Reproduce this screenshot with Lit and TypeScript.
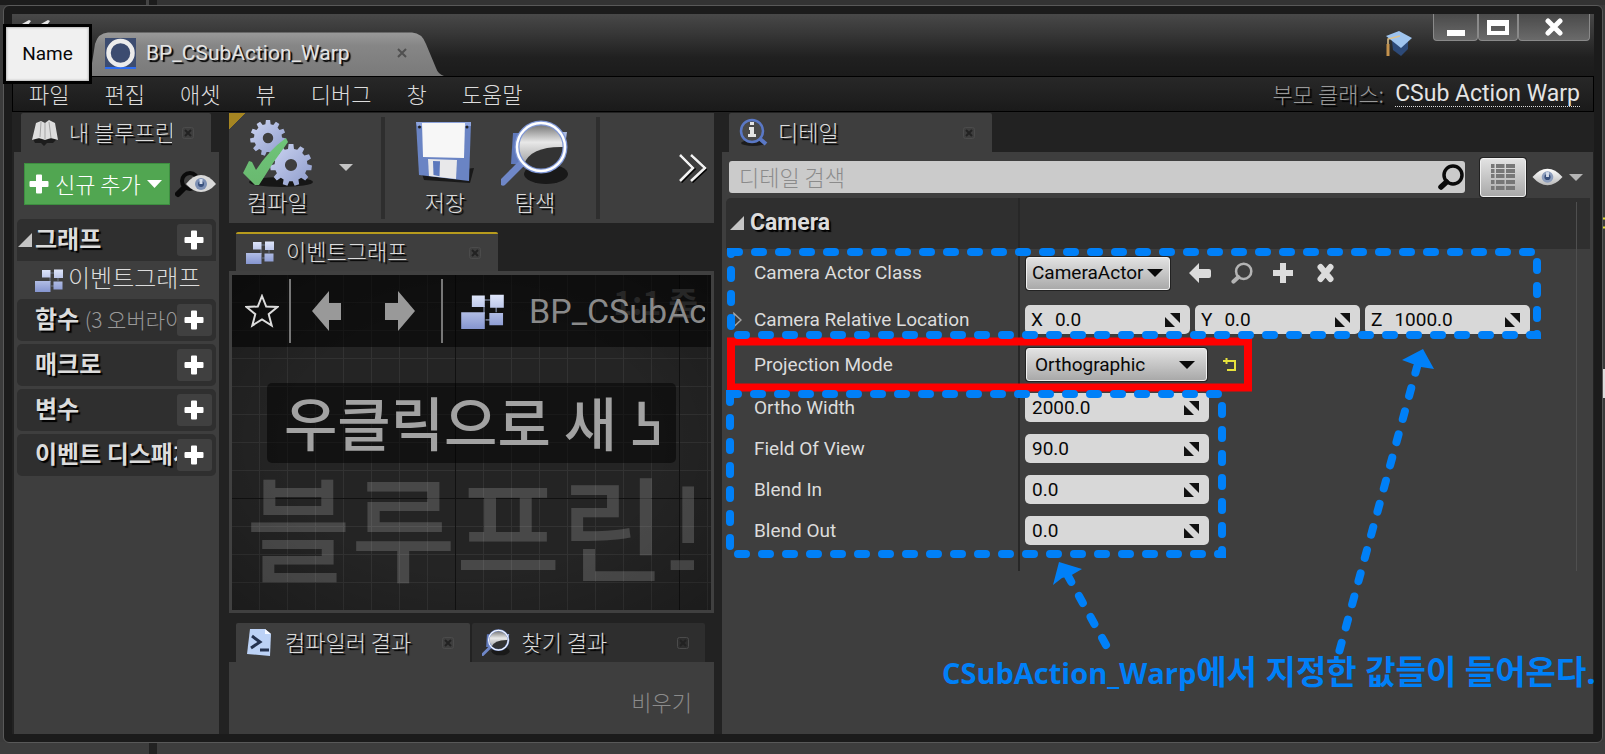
import { LitElement, html, css, svg } from "lit";
import { customElement } from "lit/decorators.js";

const plusIcon = html`<svg class="ico" width="20" height="20" viewBox="0 0 20 20" aria-hidden="true"><path d="M7 1.500Q7 .5 8 .5h4q1 0 1 1V7h5.500q1 0 1 1v4q0 1-1 1H13v5.500q0 1-1 1H8q-1 0-1-1V13H1.500q-1 0-1-1V8q0-1 1-1H7z" fill="#fff"/></svg>`;

const nodesIcon = (w: number) => html`<svg class="ico" width=${w} height=${Math.round(w * 0.82)} viewBox="0 0 28 23" aria-hidden="true">
  <defs><linearGradient id="nd" x1="0" y1="0" x2="0" y2="1"><stop offset="0" stop-color="#dfe6fa"/><stop offset="1" stop-color="#8595cf"/></linearGradient></defs>
  <path d="M15 4h4M23 8v4M15 8v5M16 17h3" stroke="#6b7488" stroke-width="1"/>
  <path d="M7 1h8.500v7.500H7z M19 .5h9V9h-9z M0 12h15.500v11H0z M18.500 12.500h9v8h-9z" fill="url(#nd)"/></svg>`;

const closeIcon = html`<svg class="ico" width="12" height="12" viewBox="0 0 12 12" aria-hidden="true"><rect x=".5" y=".5" width="11" height="11" rx="2" fill="none" stroke="#4b4b4b"/><path d="M3 3l6 6M9 3l-6 6" stroke="#222" stroke-width="2"/></svg>`;

const eyeIcon = html`<svg class="ico" width="31" height="18" viewBox="0 0 32 18" aria-hidden="true">
  <defs><linearGradient id="ey" x1="0" y1="0" x2="0" y2="1"><stop offset="0" stop-color="#fff"/><stop offset="1" stop-color="#b9b9b9"/></linearGradient></defs>
  <path d="M.5 9Q8 .5 16 .5T31.500 9Q24 17.500 16 17.500T.5 9z" fill="url(#ey)"/>
  <circle cx="16" cy="9" r="6" fill="#8d9ebd"/><circle cx="16" cy="9" r="3.200" fill="#39507c"/><path d="M14.500 4h3v5h-3z" fill="#d4dcea"/></svg>`;

const caret = (w: number, color: string) => html`<svg class="ico" width=${w} height=${Math.round(w / 2)} viewBox="0 0 14 7" preserveAspectRatio="none" aria-hidden="true"><path d="M0 0h14L7 7z" fill=${color}/></svg>`;

const spinIcon = html`<svg class="ico" width="15" height="14" viewBox="0 0 15 14" aria-hidden="true"><path d="M5 0h10v10z" fill="#111"/><path d="M0 4v10h10z" fill="#111"/></svg>`;

const gear = (cx: number, cy: number, r: number, n: number) => {
  const pts: string[] = [];
  for (let i = 0; i < n; i++) {
    const a = (i / n) * Math.PI * 2 - Math.PI / 2;
    const s = (Math.PI * 2) / n;
    for (const [f, k] of [[-0.32, 0.78], [-0.2, 1], [0.2, 1], [0.32, 0.78]]) {
      pts.push(`${(cx + Math.cos(a + f * s) * r * k).toFixed(1)} ${(cy + Math.sin(a + f * s) * r * k).toFixed(1)}`);
    }
  }
  const h = r * 0.29;
  return svg`<path fill-rule="evenodd" fill="url(#gr)" d="M${pts.join("L")}z M${cx - h} ${cy}a${h} ${h} 0 1 0 ${2 * h} 0a${h} ${h} 0 1 0 ${-2 * h} 0z"/>`;
};

const compileIcon = html`<svg class="ico" width="70" height="68" viewBox="0 0 70 68" aria-hidden="true">
  <defs><linearGradient id="gr" x1="0" y1="0" x2="1" y2="1"><stop offset="0" stop-color="#cdd5f2"/><stop offset="1" stop-color="#8d9bcb"/></linearGradient>
  <linearGradient id="ck" x1="0" y1="0" x2="0" y2="1"><stop offset="0" stop-color="#6fc47a"/><stop offset="1" stop-color="#69b96f"/></linearGradient></defs>
  <ellipse cx="38" cy="62" rx="32" ry="5" fill="#161616"/>
  ${gear(25, 18, 18, 11)}${gear(48, 45, 21, 11)}
  <path d="M0 53l6-12 3 1 4 8Q26 30 43 18l2 4Q30 42 16 65h-4z" fill="url(#ck)"/></svg>`;

const saveIcon = html`<svg class="ico" width="58" height="64" viewBox="0 0 58 64" aria-hidden="true">
  <path d="M6 54L58 48 54 63 8 60z" fill="#191919"/>
  <path d="M0 2l55 0-2 59-50-6z" fill="#6a84c4"/><path d="M0 2h55v4H1z" fill="#8ea4dc"/>
  <path d="M6 3h43l-1 35-41-1z" fill="#f7f7f7"/><circle cx="3.500" cy="7" r="1.500" fill="#222"/><circle cx="51" cy="7" r="1.500" fill="#222"/>
  <path d="M12 39l29 1-1 19-27-3z" fill="#e8e8ea"/><path d="M17 41l7 .3-.5 15L17.500 55z" fill="#5c78bd"/></svg>`;

const lensIcon = (w: number) => html`<svg class="ico" width=${w} height=${w} viewBox="0 0 68 68" aria-hidden="true">
  <defs><linearGradient id="ln" x1="0" y1="0" x2="0" y2="1"><stop offset="0" stop-color="#6a6a6a"/><stop offset=".4" stop-color="#e8e8e8"/><stop offset="1" stop-color="#8c8c8c"/></linearGradient></defs>
  <ellipse cx="45" cy="54" rx="22" ry="10" fill="#191919"/>
  <path d="M12 13h20v32l-22-1z" fill="#6079bb"/><path d="M60 12l6 0-2 14z" fill="#a9b8de"/>
  <path d="M21 43L2 62" stroke="#6f87c8" stroke-width="7" stroke-linecap="round"/>
  <circle cx="40" cy="27" r="24" fill="url(#ln)"/>
  <path d="M23 44Q30 26 63 27Q62 48 41 51 29 51 23 44z" fill="#333"/>
  <circle cx="40" cy="27" r="24" fill="none" stroke="#7f97d6" stroke-width="5"/>
  <circle cx="40" cy="27" r="24" fill="none" stroke="#fff" stroke-width="2.500"/></svg>`;

const searchIcon = (w: number, c: string, t: number) => html`<svg class="ico" width=${w} height=${w} viewBox="0 0 26 26" aria-hidden="true"><circle cx="15" cy="11" r="9" fill="none" stroke=${c} stroke-width=${t}/><path d="M8.500 18L3 23" stroke=${c} stroke-width=${t + 2} stroke-linecap="round"/></svg>`;

@customElement("app-root")
export class AppRoot extends LitElement {
  static styles = css`
    :host { display: block; font-family: Roboto, "Noto Sans CJK KR", sans-serif; color: #dcdcdc; }
    * { box-sizing: border-box; }
    button, input, select { font: inherit; color: inherit; border: 0; margin: 0; padding: 0; background: none; border-radius: 0; }
    svg { display: block; }
    .ico { flex: none; }
    .kr { font-family: "Noto Sans CJK KR", sans-serif; font-weight: 300; font-size: 22px; line-height: 26px; }
    .sh { text-shadow: 2px 2px 1px #000; }
    .clip { overflow: hidden; white-space: nowrap; }

    .desk { position: relative; min-height: 100vh; overflow: hidden; display: flex; padding: 5px 2px 11px 3px; background: linear-gradient(90deg, #1c1c1c 146px, #444 146px, #444 149px, #1c1c1c 149px, #1c1c1c 157px, #333 157px) top / 100% 5px no-repeat, linear-gradient(90deg, #3d3d3d 149px, #222 149px, #222 157px, #3d3d3d 157px) bottom / 100% 12px no-repeat, #3b3b3b; }
    .window { flex: 1; min-width: 0; display: flex; flex-direction: column; border: 1px solid #595959; border-radius: 6px; background: #1b1b1b; padding: 8px; }
    .title { height: 62px; display: flex; align-items: flex-end; justify-content: space-between; background: linear-gradient(#484848, #383838 30%, #202020 70%, #1b1b1b); padding-left: 78px; }
    .tab-main { position: relative; width: 354px; height: 44px; display: flex; align-items: center; gap: 10px; padding: 0 37px 2px 15px; }
    .tab-bg { position: absolute; inset: 0; width: 100%; height: 100%; }
    .tab-main > *:not(.tab-bg) { position: relative; }
    .tab-text { flex: 1; font-size: 21px; line-height: 24px; color: #e4e4e4; }
    .tools { align-self: stretch; display: flex; gap: 20px; }
    .cap { margin-top: 17px; }
    .wbtns { display: flex; height: 27px; padding-right: 4px; }
    .wbtn { display: grid; place-items: center; width: 45px; border: 1px solid #8a8a8a; border-top: 0; background: linear-gradient(#4a4a4a, #6a6a6a); border-radius: 0 0 4px 4px; }
    .wbtn:nth-child(2) { width: 40px; }
    .wbtn:nth-child(3) { width: 72px; }

    .menu { height: 36px; border: 1px solid #000; background: linear-gradient(#282828, #1a1a1a); display: flex; align-items: center; gap: 35px; padding: 0 13px 3px 16px; }
    .parent { margin-left: auto; display: flex; align-items: center; gap: 11px; color: #999; }
    .parent a { color: #e4e4e4; font: 400 23px/24px Roboto, sans-serif; text-decoration: none; border-bottom: 1px dotted #ddd; padding-top: 3px; }

    .body { flex: 1; background: #222; display: grid; grid-template-columns: 205px 485px minmax(0, 1fr); column-gap: 10px; padding: 1px 1px 0 2px; }
    .left, .mid, .right { display: flex; flex-direction: column; min-width: 0; }
    .right { margin-left: -2px; }
    .tab { height: 39px; background: #3e3e3e; display: flex; align-items: center; padding: 0 17px 0 10px; gap: 12px; border-radius: 2px 2px 0 0; }
    .tab .clip { flex: 1; padding-bottom: 3px; }
    .tab.active { border-top: 2px solid #b79b1d; }
    .tab.active .clip { padding-bottom: 5px; }
    .tab.idle { background: #2e2e2e; }
    .panel { flex: 1; background: #3e3e3e; }

    .left .tab { margin: 0 8px 0 7px; width: 190px; gap: 10px; }
    .left .panel { width: 205px; padding: 11px 3px; }
    .addrow { display: flex; align-items: center; gap: 5px; padding: 0 0 0 7px; margin-bottom: 14px; }
    .add { width: 146px; height: 42px; display: flex; align-items: center; gap: 6px; padding: 0 8px 0 4px; background: #51a651; color: #fff; border: 1px solid #3d8f40; white-space: nowrap; }
    .add span { flex: 1; text-align: left; padding-bottom: 2px; }
    .sec { height: 42px; background: #2f2f2f; border-radius: 5px; display: flex; align-items: center; padding: 0 4px 0 1px; margin-bottom: 3px; }
    .sec.tight { margin-bottom: 0; border-radius: 5px 5px 0 0; }
    .sec h3 { flex: 1; margin: 0 0 0 3px; padding-bottom: 4px; font-size: 24px; line-height: 32px; font-weight: 700; }
    .sec small { font-size: 21px; font-weight: 300; color: #999; text-shadow: none; }
    .tri { flex: none; width: 14px; height: 14px; }
    .sq { flex: none; width: 35px; height: 32px; background: #404040; border-radius: 3px; display: flex; align-items: center; padding-left: 7px; }
    .item { height: 38px; display: flex; align-items: center; gap: 5px; padding-left: 18px; white-space: nowrap; }
    .item.kr { font-size: 24px; }
    .item span { padding-bottom: 6px; }

    .bar { height: 110px; background: linear-gradient(135deg, #a58522 12px, #3e3e3e 12px); display: flex; align-items: stretch; padding: 4px 7px 4px 14px; }
    .tool { display: flex; flex-direction: column; align-items: center; justify-content: space-between; padding: 3px 0 0; height: 97px; }
    .tool.compile { align-items: flex-start; }
    .tool.compile span { padding-left: 4px; }
    .sep { width: 4px; background: #2e2e2e; }
    .drop { width: 68px; display: grid; place-items: center; padding: 0 2px 2px 0; }
    .pair { flex: none; display: flex; gap: 27px; padding: 0 27px 0 31px; }
    .more { margin-left: auto; display: grid; place-items: center; }
    .mid .doc { margin: 9px 0 0 7px; width: 262px; }
    .graph { position: relative; flex: 1; overflow: hidden; border: 3px solid #404040; border-top-width: 4px; background: #242424; display: flex; flex-direction: column; }
    .grid { position: absolute; inset: 0; background:
      radial-gradient(ellipse at center, transparent 55%, rgba(0,0,0,.3) 110%),
      linear-gradient(90deg, transparent 223px, #111 223px) 0 0 / 224px 100%,
      linear-gradient(transparent 223px, #111 223px) 0 0 / 100% 224px,
      linear-gradient(90deg, transparent 27px, #323232 27px) 0 0 / 28px 100%,
      linear-gradient(transparent 27px, #323232 27px) 0 0 / 100% 28px; }
    .crumbs { position: relative; height: 72px; background: rgba(0,0,0,.55); display: flex; align-items: center; padding: 0 6px 0 13px; }
    .crumbs i { width: 2px; height: 64px; background: #777; flex: none; }
    .crumbs .star { margin-right: 10px; }
    .crumbs .back { margin: 0 44px 0 21px; }
    .crumbs .fwd { margin-right: 26px; }
    .crumbs .nodes { margin: 0 25px 0 18px; }
    .crumbs .name { flex: 1; font-size: 34px; line-height: 40px; color: #8a8a8a; position: relative; }
    .zoom { position: absolute; right: 13px; top: 4px; font: 700 32px/44px "Noto Sans CJK KR", sans-serif; color: #272727; }
    .hint { position: relative; margin: 36px 35px 0; height: 80px; padding: 0 17px; border-radius: 5px; background: rgba(0,0,0,.5); font: 500 58px/76px "Noto Sans CJK KR", sans-serif; color: #a2a2a2; }
    .mark { position: relative; margin: 0 17px 0 14px; font: 500 114px/122px "Noto Sans CJK KR", sans-serif; color: rgba(255,255,255,.17); }
    .results { display: flex; gap: 2px; margin: 10px 9px 0 7px; }
    .results .tab { flex: 1; padding-right: 16px; }
    .log { height: 72px; background: #3e3e3e; display: flex; justify-content: flex-end; align-items: center; padding: 6px 22px 0; color: #8b8b8b; }

    .right .tab { width: 263px; margin-left: 7px; gap: 10px; }
    .right .panel { padding: 5px 3px 0 4px; }
    .search { display: flex; align-items: center; padding: 0 7px 0 3px; height: 40px; }
    .search .box { flex: 1; height: 32px; display: flex; align-items: center; background: #cbcbcb; border-radius: 3px; padding: 0 1px 0 10px; }
    .box input { flex: 1; min-width: 0; height: 32px; padding-bottom: 3px; color: #222; outline: 0; }
    .box input::placeholder { color: #8b8b8b; opacity: 1; }
    .raised { border: 1px solid #f0f0f0; box-shadow: 0 0 0 1px #222; background: linear-gradient(#e2e2e2, #a9a9a9); border-radius: 3px; }
    .matrix { width: 46px; height: 39px; display: grid; place-items: center; margin: 0 6px 0 15px; }
    .opts { display: flex; align-items: center; gap: 6px; }
    .table { display: grid; grid-template-columns: 292px 2px minmax(0, 1fr); margin-top: 1px; }
    .cells { display: contents; }
    .head { height: 51px; background: #2f2f2f; }
    .head.name { display: flex; align-items: center; gap: 6px; padding: 0 0 2px 4px; border-radius: 5px 0 0 0; }
    .head.name h2 { margin: 0; font-size: 23px; line-height: 28px; }
    .line { background: #272727; }
    .cell { display: flex; align-items: center; font-size: 19px; line-height: 24px; }
    .cell.lbl { padding-left: 28px; }
    .cell.lbl.exp { padding-left: 7px; gap: 12px; }
    .cell.val { padding-left: 5px; gap: 5px; color: #080808; }
    .h48 { height: 48px; } .h45 { height: 45px; } .h41 { height: 41px; } .h20 { height: 20px; }
    .sel { display: grid; height: 33px; align-items: center; margin-left: 1px; }
    .sel > * { grid-area: 1 / 1; }
    .sel select { appearance: none; height: 31px; padding: 0 8px; outline: 0; }
    .sel.short { width: 144px; } .sel.short select { padding: 0 5px; }
    .sel.long { width: 181px; margin-right: 11px; }
    .sel svg { justify-self: end; margin-right: 11px; pointer-events: none; }
    .sel.short svg { margin-right: 6px; }
    .num { display: flex; align-items: center; height: 29px; width: 184px; background: #d8d8d8; border-radius: 5px; padding: 0 10px 0 7px; gap: 12px; }
    .num.axis { width: 165px; padding: 0 10px 0 6px; }
    .num input { flex: 1; min-width: 0; width: 20px; outline: 0; }
    .acts { display: flex; align-items: center; gap: 20px; padding-left: 14px; }
    .notes { position: absolute; left: 0; top: 0; width: 100%; height: 100%; overflow: visible; pointer-events: none; }
    .note { position: absolute; left: 942px; top: 651px; white-space: nowrap; font: 700 29px/42px "Open Sans", "Noto Sans CJK KR", sans-serif; color: #0080f8; }
    .note b { font-size: 33px; font-weight: 700; }
    .tip { position: absolute; left: 3px; top: 24px; width: 89px; height: 60px; border: 3px solid #000; background: #f0f0f0; box-shadow: inset 0 0 2px 1px #bbb; color: #080808; font-size: 19px; line-height: 54px; text-align: center; }
  `;

  private tri() {
    return html`<svg class="tri" viewBox="0 0 14 14" aria-hidden="true"><path d="M14 0v14H0z" fill="#c4c4c4"/></svg>`;
  }

  private section(title: string, open = false, extra = "") {
    return html`<div class="sec ${open ? "tight" : ""}">
      ${open ? this.tri() : html`<span class="tri"></span>`}
      <h3 class="kr sh clip">${title} ${extra ? html`<small>${extra}</small>` : ""}</h3>
      <button class="sq" aria-label="${title} +">${plusIcon}</button>
    </div>`;
  }

  private num(id: string, value: string, axis = "") {
    return html`<div class="num ${axis ? "axis" : ""}">
      ${axis ? html`<label for=${id}>${axis}</label>` : ""}
      <input id=${id} .value=${value} />${spinIcon}
    </div>`;
  }

  private row(label: string, id: string, value: string) {
    return html`<div class="cells">
      <label class="cell lbl h41" for=${id}>${label}</label><div class="line"></div>
      <div class="cell val">${this.num(id, value)}</div>
    </div>`;
  }

  render() {
    return html`<div class="desk">
      <div class="window">
        <header class="title">
          <div class="tab-main">
            <svg class="tab-bg" viewBox="0 0 354 44" preserveAspectRatio="none" aria-hidden="true">
              <defs><linearGradient id="tb" x1="0" y1="0" x2="0" y2="1"><stop offset="0" stop-color="#9a9a9a"/><stop offset=".3" stop-color="#868686"/><stop offset="1" stop-color="#7a7a7a"/></linearGradient></defs>
              <path d="M0 44L5 12Q8 1 18 .5H322Q332 1 336 12L346 36Q348 42 354 44z" fill="url(#tb)"/></svg>
            <svg class="ico" width="31" height="31" viewBox="0 0 31 31" aria-hidden="true"><path d="M0 0h31v31H0z" fill="#3c4c70"/><path d="M0 29h31v2H0z" fill="#2f6df0"/><circle cx="15.500" cy="15" r="12" fill="none" stroke="#ececec" stroke-width="4.500"/></svg>
            <span class="tab-text sh">BP_CSubAction_Warp</span>
            <svg class="ico" width="10" height="10" viewBox="0 0 10 10" aria-hidden="true"><path d="M1 1l8 8M9 1L1 9" stroke="#505050" stroke-width="2"/></svg>
          </div>
          <div class="tools">
            <svg class="cap" width="28" height="26" viewBox="0 0 28 26" aria-hidden="true"><path d="M7 10l1 9 8 6 7-7V10z" fill="#2d4a78"/><path d="M1 5l13-5 13 7-11 10z" fill="#9fc4ee"/><path d="M15 5L3 8v6" fill="none" stroke="#e0c38c" stroke-width="1.500"/><path d="M1.500 13h3v12h-3z" fill="#c4924d"/></svg>
            <div class="wbtns">
              <button class="wbtn" aria-label="Minimize"><svg width="20" height="20" viewBox="0 0 20 20"><path d="M1 13h18v6H1z" fill="#fff"/></svg></button>
              <button class="wbtn" aria-label="Maximize"><svg width="22" height="16" viewBox="0 0 22 16"><path fill-rule="evenodd" d="M0 1h22v15H0z M4 7v5h14V7z" fill="#fff"/></svg></button>
              <button class="wbtn" aria-label="Close"><svg width="18" height="18" viewBox="0 0 18 18"><path d="M3 3l12 12M15 3L3 15" stroke="#fff" stroke-width="5" stroke-linecap="round"/></svg></button>
            </div>
          </div>
        </header>
        <nav class="menu kr">
          ${["파일", "편집", "애셋", "뷰", "디버그", "창", "도움말"].map((t) => html`<button>${t}</button>`)}
          <div class="parent"><span class="sh">부모 클래스:</span><a href="#">CSub Action Warp</a></div>
        </nav>
        <main class="body">
          <section class="left">
            <div class="tab kr">
              <svg class="ico" width="28" height="28" viewBox="0 0 28 28" aria-hidden="true"><path d="M2 20h24l-4 4H16l-3 3-3-3H4z" fill="#1c1c1c"/><path d="M5 4l5-2 4 2 4-3 6 3 3 17-7-2-6 2-6-2-7 2z" fill="#dedede"/><path d="M10 3L9 18M14 4v16M18 3l2 16" stroke="#a5a5a5"/></svg>
              <span class="clip sh">내 블루프린</span>${closeIcon}
            </div>
            <div class="panel">
              <div class="addrow">
                <button class="add kr">${plusIcon}<span>신규 추가</span>${caret(15, "#fff")}</button>
                <svg class="ico" width="42" height="28" viewBox="0 0 42 28" aria-hidden="true"><circle cx="15" cy="11" r="8" fill="none" stroke="#0a0a0a" stroke-width="4"/><path d="M9 18L3 24" stroke="#0a0a0a" stroke-width="6" stroke-linecap="round"/><path d="M11 14Q18 5 26 5t15 9q-7 8-15 8T11 14z" fill="#d9d9d9"/><circle cx="26" cy="14" r="6" fill="#7d90b4"/><circle cx="26" cy="14" r="3" fill="#39507c"/><path d="M24.500 9h3v5h-3z" fill="#d4dcea"/></svg>
              </div>
              ${this.section("그래프", true)}
              <div class="item kr">${nodesIcon(28)}<span>이벤트그래프</span></div>
              ${this.section("함수", false, "(3 오버라이드 가능)")}
              ${this.section("매크로")}
              ${this.section("변수")}
              ${this.section("이벤트 디스패처")}
            </div>
          </section>

          <section class="mid">
            <div class="bar kr">
              <button class="tool compile sh">${compileIcon}<span>컴파일</span></button>
              <button class="drop" aria-label="컴파일 옵션">${caret(14, "#c4c4c4")}</button>
              <div class="sep"></div>
              <div class="pair">
                <button class="tool sh">${saveIcon}<span>저장</span></button>
                <button class="tool sh">${lensIcon(68)}<span>탐색</span></button>
              </div>
              <div class="sep"></div>
              <button class="more" aria-label="더 보기"><svg width="28" height="30" viewBox="0 0 28 30"><path d="M1 2l13 13L1 28M12 2l14 13-14 13" fill="none" stroke="#000" stroke-width="3" transform="translate(1 1)"/><path d="M1 2l13 13L1 28M12 2l14 13-14 13" fill="none" stroke="#f2f2f2" stroke-width="2.500"/></svg></button>
            </div>
            <div class="tab doc active kr">${nodesIcon(28)}<span class="clip sh">이벤트그래프</span>${closeIcon}</div>
            <div class="graph">
              <div class="grid"></div>
              <div class="crumbs">
                <span class="zoom">1:1 줌</span>
                <svg class="ico star" width="34" height="34" viewBox="0 0 34 34" aria-hidden="true"><path d="M17 2l4.200 10.500L32.500 13l-8.800 7.200 3 11.300L17 25.500 7.300 31.500l3-11.300L1.500 13l11.300-.5z" fill="none" stroke="#ddd" stroke-width="2"/></svg>
                <i></i>
                <svg class="ico back" width="29" height="40" viewBox="0 0 29 40" aria-hidden="true"><path d="M0 20L17 0v12h12v17H17v11z" fill="#999"/></svg>
                <svg class="ico fwd" width="30" height="40" viewBox="0 0 30 40" aria-hidden="true"><path d="M30 20L13 0v12H0v17h13v11z" fill="#999"/></svg>
                <i></i>
                <span class="nodes">${nodesIcon(43)}</span>
                <span class="name clip">BP_CSubAction_Warp</span>
              </div>
              <div class="hint"><div class="clip">우클릭으로 새 노드</div></div>
              <div class="mark clip">블루프린트</div>
            </div>
            <div class="results kr">
              <div class="tab"><svg class="ico" width="27" height="27" viewBox="0 0 27 27" aria-hidden="true"><path d="M4 0h15l6 5-1 22L1 25z" fill="#bcd2f6"/><path d="M19 0v5h6z" fill="#f4f8ff"/><path d="M6 7l8 6-9 6M14 21h9" fill="none" stroke="#24324f" stroke-width="3"/></svg><span class="clip sh">컴파일러 결과</span>${closeIcon}</div>
              <div class="tab idle">${lensIcon(28)}<span class="clip sh">찾기 결과</span>${closeIcon}</div>
            </div>
            <div class="log kr"><button>비우기</button></div>
          </section>

          <section class="right">
            <div class="tab kr">
              <svg class="ico" width="29" height="29" viewBox="0 0 29 29" aria-hidden="true"><ellipse cx="14" cy="25" rx="12" ry="3" fill="#1c1c1c"/><path d="M20 20l7 6" stroke="#5a78c6" stroke-width="4"/><circle cx="13" cy="13" r="11" fill="#4a4a4a" stroke="#5a78c6" stroke-width="2.500"/><path d="M11 4h4v3h-4zM10 9h5v7h2v3H9v-3h2v-4h-1z" fill="#e4e4e4"/></svg>
              <span class="clip sh">디테일</span>${closeIcon}
            </div>
            <div class="panel">
              <div class="search">
                <div class="box"><input class="kr" type="search" aria-label="디테일 검색" placeholder="디테일 검색" />${searchIcon(26, "#0a0a0a", 3.5)}</div>
                <button class="matrix raised" aria-label="매트릭스"><svg width="24" height="26" viewBox="0 0 24 26">${[0, 5, 10, 16, 22].map((y) => svg`<path d="M0 ${y}h3.500v4H0zM5 ${y}h8.500v4H5zM15 ${y}h9v4h-9z" fill="#777"/>`)}</svg></button>
                <button class="opts" aria-label="보기 옵션">${eyeIcon}${caret(14, "#b4b4b4")}</button>
              </div>
              <div class="table">
                <div class="head name">${this.tri()}<h2 class="sh">Camera</h2></div><div class="line"></div><div class="head"></div>
                <label class="cell lbl h48" for="cls">Camera Actor Class</label><div class="line"></div>
                <div class="cell val">
                  <div class="sel short raised"><select id="cls"><option>CameraActor</option></select>${caret(16, "#080808")}</div>
                  <div class="acts">
                    <svg width="22" height="20" viewBox="0 0 22 20"><path d="M0 10L10 0v6h10q2 0 2 2v5q0 2-2 2H10v5z" fill="#dcdcdc"/></svg>
                    ${searchIcon(22, "#b4b4b4", 3)}
                    <svg width="20" height="20" viewBox="0 0 20 20"><path d="M7 0h6v7h7v6h-7v7H7v-7H0V7h7z" fill="#dcdcdc"/></svg>
                    <svg width="24" height="20" viewBox="0 0 24 20"><path d="M7.500 4l10 12M17.500 4l-10 12" stroke="#dcdcdc" stroke-width="6" stroke-linecap="round"/></svg>
                  </div>
                </div>
                <div class="cell lbl exp h45"><svg width="9" height="16" viewBox="0 0 9 16"><path d="M1 1.500v13L8 8z" fill="none" stroke="#a5a5a5" stroke-width="1.500"/></svg>Camera Relative Location</div><div class="line"></div>
                <div class="cell val">${this.num("x", "0.0", "X")}${this.num("y", "0.0", "Y")}${this.num("z", "1000.0", "Z")}</div>
                <label class="cell lbl h45" for="proj">Projection Mode</label><div class="line"></div>
                <div class="cell val">
                  <div class="sel long raised"><select id="proj"><option>Orthographic</option></select>${caret(16, "#080808")}</div>
                  <svg width="14" height="14" viewBox="0 0 14 14"><path d="M0 3h12v9H4M3.500 0v6" fill="none" stroke="#e6e23c" stroke-width="2"/></svg>
                </div>
                ${this.row("Ortho Width", "ow", "2000.0")}
                ${this.row("Field Of View", "fov", "90.0")}
                ${this.row("Blend In", "bi", "0.0")}
                ${this.row("Blend Out", "bo", "0.0")}
                <div class="h20"></div><div class="line"></div><div></div>
              </div>
            </div>
          </section>
        </main>
      </div>

      <svg class="notes" aria-hidden="true">
        <path d="M1576.500 202V571" stroke="#4f4f4f"/>
        <path d="M1603 218.500h2M1603 227.500h2" stroke="#e6e23c" stroke-width="2"/>
        <path d="M1603 369h2v29h-2z" fill="#ddd"/>
        <path d="M22 24l7-4 2 1-3 4zM41 24l7-4 2 1-3 4z" fill="#e8e8e8"/>
        <rect x="731" y="341.500" width="517" height="46" fill="none" stroke="#f00" stroke-width="8"/>
        <g fill="none" stroke="#0080f8" stroke-width="8" stroke-linecap="round" stroke-dasharray="8 16">
          <path d="M731 252H1537V335H731z"/>
          <path d="M730 394H1222V554H730z"/>
          <path d="M1339.500 650.500L1417 367"/>
          <path d="M1106 645L1068 576"/>
        </g>
        <path d="M1423 349l11 20-15-3-17-6zM1402 360l32 9-13-2z" fill="#0080f8"/>
        <path d="M1059 562l23 7-12 7-8 2-9 7z" fill="#0080f8"/>
      </svg>
      <div class="note">CSubAction_Warp<b>에서 지정한 값들이 들어온다.</b></div>
      <div class="tip">Name</div>
    </div>`;
  }
}
